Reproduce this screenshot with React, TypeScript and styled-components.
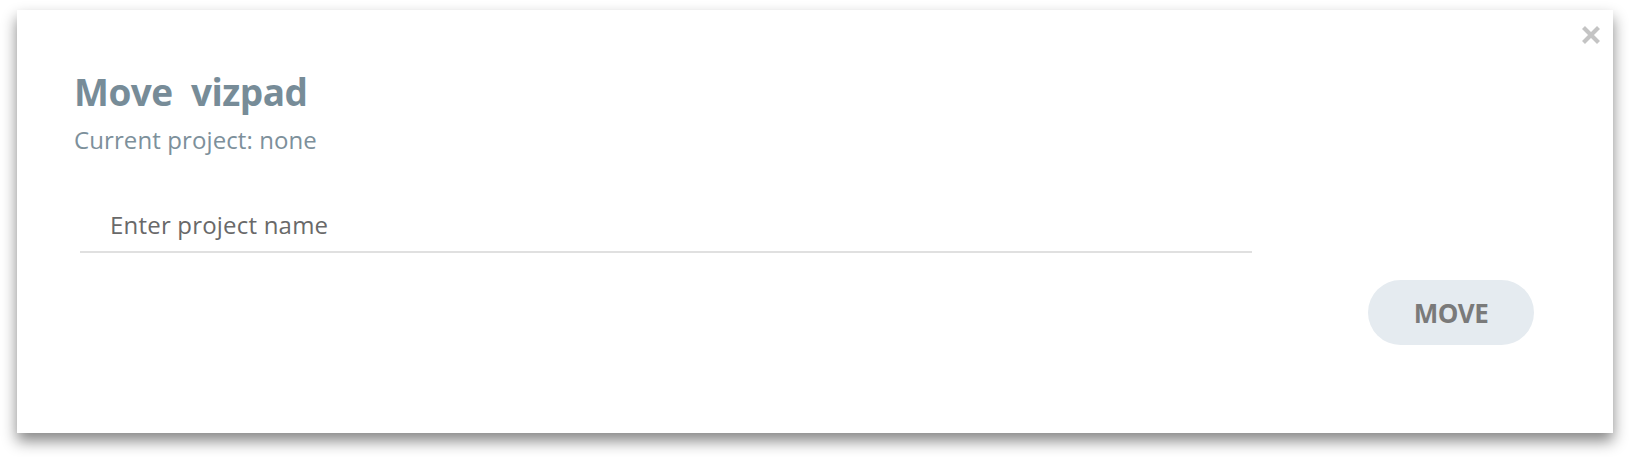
import React from "react";
import styled, { createGlobalStyle } from "styled-components";

const GlobalStyle = createGlobalStyle`
  html, body { margin: 0; padding: 0; background: #ffffff; }
  body { font-family: "Open Sans", "Noto Sans", sans-serif; }
  * { box-sizing: border-box; }
`;

const Page = styled.div`
  width: 1629px;
  height: 457px;
  padding: 10px 16px 0 17px;
  background: #ffffff;
`;

const Dialog = styled.div`
  position: relative;
  width: 1596px;
  height: 423px;
  background: #ffffff;
  box-shadow: 0 8px 14px rgba(0, 0, 0, 0.48);
  padding: 59px 79px 0 57px;
  display: flex;
  flex-direction: column;
`;

const CloseButton = styled.button`
  position: absolute;
  top: 15px;
  right: 12px;
  width: 20px;
  height: 20px;
  padding: 0;
  border: none;
  background: transparent;
  cursor: pointer;
  display: flex;
  align-items: center;
  justify-content: center;
`;

const Title = styled.h2`
  margin: 0;
  font-size: 37px;
  line-height: 46px;
  font-weight: 700;
  letter-spacing: -0.5px;
  color: #778c98;
  white-space: pre;
`;

const Subtitle = styled.div`
  margin-top: 11px;
  font-size: 24px;
  line-height: 28px;
  letter-spacing: 0.1px;
  color: #7d909b;
`;

const NameInput = styled.input`
  margin: 43px 0 0 6px;
  width: 1172px;
  height: 56px;
  padding: 0 30px;
  border: none;
  border-bottom: 2px solid #e0e0e0;
  outline: none;
  font-family: "Open Sans", "Noto Sans", sans-serif;
  font-size: 24px;
  letter-spacing: 0.2px;
  color: #444;
  background: transparent;
  &::placeholder { color: #696969; }
`;

const Footer = styled.div`
  display: flex;
  justify-content: flex-end;
  margin-top: 27px;
`;

const MoveButton = styled.button`
  width: 166px;
  height: 65px;
  border: none;
  border-radius: 33px;
  background: #e5ebf0;
  color: #7a7a7a;
  font-family: "Open Sans", "Noto Sans", sans-serif;
  font-weight: 700;
  font-size: 26px;
  letter-spacing: -0.5px;
  cursor: pointer;
`;

export default function App() {
  return (
    <>
      <GlobalStyle />
      <Page>
        <Dialog>
          <CloseButton aria-label="Close">
            <svg width="20" height="20" viewBox="0 0 20 20">
              <path d="M2.5 2.5 L17.5 17.5 M17.5 2.5 L2.5 17.5" stroke="#c4c4c4" strokeWidth="4.2" strokeLinecap="butt" />
            </svg>
          </CloseButton>
          <Title>{"Move  vizpad"}</Title>
          <Subtitle>Current project: none</Subtitle>
          <NameInput placeholder="Enter project name" />
          <Footer>
            <MoveButton>MOVE</MoveButton>
          </Footer>
        </Dialog>
      </Page>
    </>
  );
}
